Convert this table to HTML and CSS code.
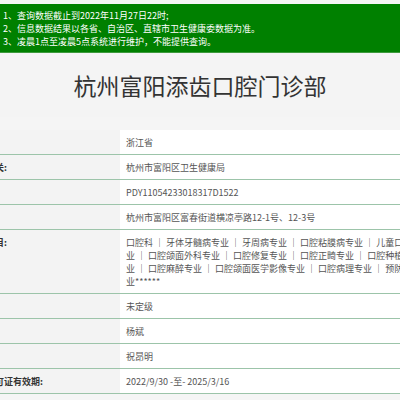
FILE: index.html
```html
<!DOCTYPE html>
<html lang="zh-CN">
<head>
<meta charset="utf-8">
<title>杭州富阳添齿口腔门诊部</title>
<link rel="stylesheet" href="styles.css">
</head>
<body>
<div class="page">
  <div class="notice">
    <p>1、查询数据截止到2022年11月27日22时;</p>
    <p>2、信息数据结果以各省、自治区、直辖市卫生健康委数据为准。</p>
    <p>3、凌晨1点至凌晨5点系统进行维护，不能提供查询。</p>
  </div>
  <h1 class="title">杭州富阳添齿口腔门诊部</h1>
  <div class="info">
    <div class="row"><div class="label">省份:</div><div class="value">浙江省</div></div>
    <div class="row"><div class="label">登记机关:</div><div class="value">杭州市富阳区卫生健康局</div></div>
    <div class="row"><div class="label">登记号:</div><div class="value">PDY11054233018317D1522</div></div>
    <div class="row"><div class="label">地址:</div><div class="value">杭州市富阳区富春街道横凉亭路12-1号、12-3号</div></div>
    <div class="row"><div class="label">诊疗科目:</div><div class="value">口腔科 ｜ 牙体牙髓病专业 ｜ 牙周病专业 ｜ 口腔粘膜病专业 ｜ 儿童口腔专<br>业 ｜ 口腔颌面外科专业 ｜ 口腔修复专业 ｜ 口腔正畸专业 ｜ 口腔种植专<br>业 ｜ 口腔麻醉专业 ｜ 口腔颌面医学影像专业 ｜ 口腔病理专业 ｜ 预防口腔专<br>业******</div></div>
    <div class="row"><div class="label">级别:</div><div class="value">未定级</div></div>
    <div class="row"><div class="label">法人:</div><div class="value">杨斌</div></div>
    <div class="row"><div class="label">负责人:</div><div class="value">祝昂明</div></div>
    <div class="row"><div class="label">执业许可证有效期:</div><div class="value">2022/9/30 -至- 2025/3/16</div></div>
  </div>
</div>
</body>
</html>
```

FILE: styles.css
```css
html, body {
  margin: 0;
  padding: 0;
}
body {
  background: #f5f5f5;
  font-family: "Noto Sans CJK SC", "Noto Sans", sans-serif;
  width: 400px;
  height: 400px;
  overflow: hidden;
}
.page {
  width: 400px;
  overflow: hidden;
}
.notice {
  margin-top: 4px;
  background: #008000;
  color: #fff;
  font-size: 9px;
  line-height: 13px;
  padding: 5px 3px 4px;
  border-bottom: 1px solid #3e9a3e;
}
.notice p {
  margin: 0;
  white-space: nowrap;
}
.title {
  margin: 0;
  height: 64px;
  display: flex;
  align-items: center;
  justify-content: center;
  font-size: 23px;
  font-weight: normal;
  color: #333;
  background: #f4f4f4;
}
.info {
  margin: 13px 0 0 -40px;
  width: 540px;
}
.row {
  display: grid;
  grid-template-columns: 160px 1fr;
  border-bottom: 1px solid #9cc4a9;
  font-size: 9px;
  line-height: 13px;
}
.label {
  background: #f3f3f3;
  padding: 5.5px 8px;
  font-weight: bold;
  color: #333;
  white-space: nowrap;
}
.value {
  background: #fff;
  padding: 5.5px 6px;
  color: #555;
  white-space: nowrap;
}
```
